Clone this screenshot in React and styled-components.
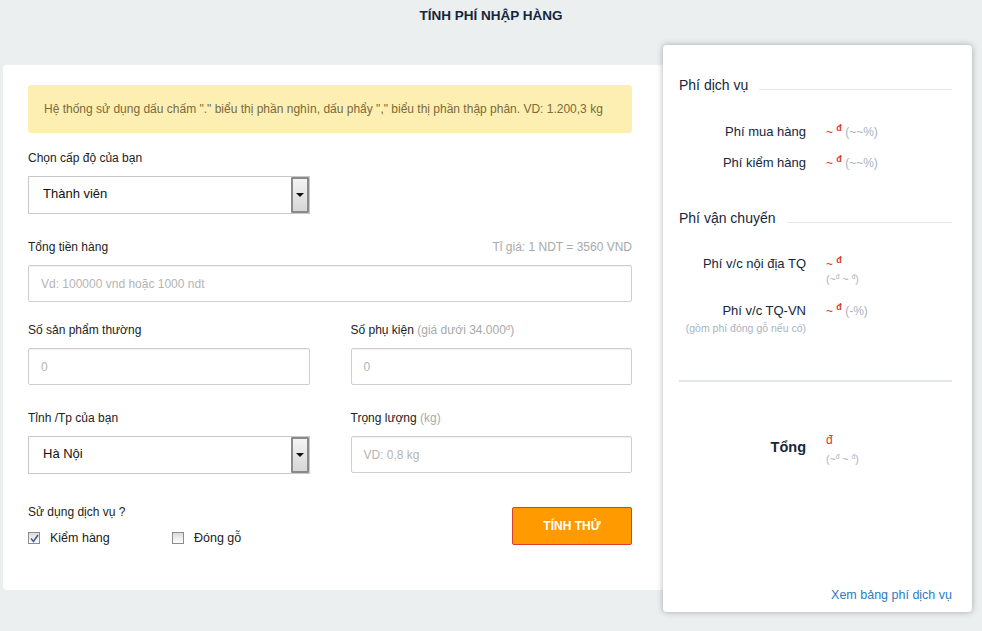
import React from 'react'
import styled, { createGlobalStyle } from 'styled-components'

const GlobalStyle = createGlobalStyle`
  body {
    margin: 0;
    background: #ebeff0;
    font-family: "Liberation Sans", Arial, sans-serif;
  }
`

const Page = styled.div`
  width: 982px;
  height: 631px;
  overflow: hidden;
  background: #ebeff0;
`

const Header = styled.h1`
  margin: 0;
  height: 45px;
  padding-top: 8px;
  box-sizing: border-box;
  text-align: center;
  font-size: 13.5px;
  line-height: 15px;
  font-weight: bold;
  color: #14263a;
`

const Main = styled.div`
  display: flex;
  align-items: flex-start;
  padding: 0 10px 0 3px;
`

const FormCard = styled.div`
  width: 660px;
  height: 525px;
  margin-top: 20px;
  box-sizing: border-box;
  padding: 20px 31px 0 25px;
  background: #fff;
  border-radius: 4px 0 0 4px;
  color: #222;
  font-size: 12px;
`

const Notice = styled.div`
  height: 48px;
  display: flex;
  align-items: center;
  padding: 0 16px;
  box-sizing: border-box;
  background: #fdefb2;
  border-radius: 3px;
  color: #7a6a3c;
  font-size: 12px;
`

const Row = styled.div`
  display: flex;
  gap: 41px;
  margin-top: ${({ top }) => top}px;
`

const Group = styled.div`
  flex: ${({ fixed }) => (fixed ? `0 0 ${fixed}px` : 1)};
  min-width: 0;
`

const LabelLine = styled.div`
  display: flex;
  justify-content: space-between;
  line-height: 16px;
  margin-bottom: 10px;
`

const Muted = styled.span`
  color: #a9a9a9;
`

const Sup = styled.sup`
  font-size: 0.65em;
  vertical-align: 0.55em;
  line-height: 0;
`

const Input = styled.div`
  height: 37px;
  box-sizing: border-box;
  border: 1px solid #cfcfcf;
  border-radius: 2px;
  box-shadow: inset 0 1px 1px rgba(0, 0, 0, 0.06);
  padding-left: 12px;
  display: flex;
  align-items: center;
  color: #b4b4b4;
`

const Select = styled.div`
  height: 38px;
  box-sizing: border-box;
  border: 1px solid #c8c8c8;
  display: flex;
  align-items: stretch;
  color: #111;
  font-size: 13px;
`

const SelectValue = styled.div`
  flex: 1;
  display: flex;
  align-items: center;
  padding: 0 0 3px 14px;
`

const SelectArrow = styled.div`
  width: 18px;
  box-sizing: border-box;
  border: 2px solid #8a8a8a;
  border-radius: 1px;
  background: linear-gradient(#f4f4f4, #d6d6d6);
  display: flex;
  align-items: center;
  justify-content: center;

  &::after {
    content: '';
    border-left: 4px solid transparent;
    border-right: 4px solid transparent;
    border-top: 4px solid #111;
  }
`

const Bottom = styled.div`
  display: flex;
  justify-content: space-between;
  align-items: flex-start;
  margin-top: 30px;
`

const ServiceBlock = styled.div`
  line-height: 16px;
`

const Checks = styled.div`
  display: flex;
  margin-top: 10px;
`

const CheckItem = styled.label`
  width: 144px;
  display: flex;
  align-items: center;
  gap: 10px;
  font-size: 12.5px;
  color: #222;
`

const Box = styled.span`
  width: 12px;
  height: 12px;
  box-sizing: border-box;
  border: 1px solid #8c8c8c;
  background: linear-gradient(#dcdcdc, #fdfdfd);
  display: flex;
  align-items: center;
  justify-content: center;
`

const Button = styled.button`
  width: 120px;
  height: 38px;
  margin-top: 3px;
  background: #ff9a00;
  border: 1px solid #d8402e;
  border-radius: 2px;
  color: #fff;
  font-family: "Liberation Sans", Arial, sans-serif;
  font-weight: bold;
  font-size: 12px;
`

const SideCard = styled.div`
  width: 309px;
  height: 567px;
  box-sizing: border-box;
  padding: 32px 20px 10px 16px;
  background: #fff;
  border-radius: 4px;
  box-shadow: 0 0 6px rgba(0, 0, 0, 0.3);
  display: flex;
  flex-direction: column;
  color: #15273a;
  font-size: 13px;
`

const SectionTitle = styled.div`
  display: flex;
  align-items: center;
  gap: 11px;
  font-size: 14px;
  line-height: 16px;
  margin-top: ${({ top }) => top || 0}px;

  &::after {
    content: '';
    flex: 1;
    height: 1px;
    margin-top: 8px;
    background: #e4e8e9;
  }
`

const FeeRow = styled.div`
  display: flex;
  gap: 20px;
  margin-top: ${({ top }) => top}px;
`

const FeeLabel = styled.div`
  width: 127px;
  text-align: right;
  line-height: 16px;
  font-size: ${({ total }) => (total ? '14.5px' : '13px')};
  font-weight: ${({ total }) => (total ? 'bold' : 'normal')};
  padding-top: ${({ total }) => (total ? 7 : 0)}px;
`

const Note = styled.div`
  font-size: 10.5px;
  color: #a9b3bf;
  line-height: 14px;
  margin-top: 2px;
`

const FeeValue = styled.div`
  font-size: 12px;
  line-height: 16px;
`

const Red = styled.span`
  color: #dd3526;

  sup {
    font-weight: bold;
    font-size: 0.75em;
  }
`

const Grey = styled.span`
  color: #a9b3bf;
`

const SubValue = styled.div`
  font-size: 10.5px;
  line-height: 14px;
  color: #a9b3bf;
`

const Divider = styled.div`
  height: 2px;
  background: #e3e7e8;
  margin-top: 45px;
`

const Link = styled.a`
  margin-top: auto;
  align-self: flex-end;
  color: #2c7cc1;
  font-size: 12.5px;
  text-decoration: none;
`

function Check ({ checked, children }) {
  return (
    <CheckItem>
      <Box>
        {checked && (
          <svg width='9' height='9' viewBox='0 0 9 9'>
            <path d='M1 4.5 L3.5 7.5 L8 1' fill='none' stroke='#4a5b9c' strokeWidth='1.6' />
          </svg>
        )}
      </Box>
      {children}
    </CheckItem>
  )
}

export default function App () {
  return (
    <Page>
      <GlobalStyle />
      <Header>TÍNH PHÍ NHẬP HÀNG</Header>
      <Main>
        <FormCard>
          <Notice>
            Hệ thống sử dụng dấu chấm "." biểu thị phần nghìn, dấu phẩy "," biểu thị phần thập phân. VD: 1.200,3 kg
          </Notice>

          <Row top={17}>
            <Group fixed={282}>
              <LabelLine>Chọn cấp độ của bạn</LabelLine>
              <Select>
                <SelectValue>Thành viên</SelectValue>
                <SelectArrow />
              </Select>
            </Group>
          </Row>

          <Row top={25}>
            <Group>
              <LabelLine>
                <span>Tổng tiền hàng</span>
                <Muted>Tỉ giá: 1 NDT = 3560 VND</Muted>
              </LabelLine>
              <Input>Vd: 100000 vnd hoặc 1000 ndt</Input>
            </Group>
          </Row>

          <Row top={20}>
            <Group>
              <LabelLine>Số sản phẩm thường</LabelLine>
              <Input>0</Input>
            </Group>
            <Group>
              <LabelLine>
                <span>Số phụ kiện <Muted>(giá dưới 34.000<Sup>đ</Sup>)</Muted></span>
              </LabelLine>
              <Input>0</Input>
            </Group>
          </Row>

          <Row top={25}>
            <Group>
              <LabelLine>Tỉnh /Tp của bạn</LabelLine>
              <Select>
                <SelectValue>Hà Nội</SelectValue>
                <SelectArrow />
              </Select>
            </Group>
            <Group>
              <LabelLine>
                <span>Trọng lượng <Muted>(kg)</Muted></span>
              </LabelLine>
              <Input>VD: 0,8 kg</Input>
            </Group>
          </Row>

          <Bottom>
            <ServiceBlock>
              Sử dụng dịch vụ ?
              <Checks>
                <Check checked>Kiểm hàng</Check>
                <Check>Đóng gỗ</Check>
              </Checks>
            </ServiceBlock>
            <Button>TÍNH THỬ</Button>
          </Bottom>
        </FormCard>

        <SideCard>
          <SectionTitle>Phí dịch vụ</SectionTitle>
          <FeeRow top={31}>
            <FeeLabel>Phí mua hàng</FeeLabel>
            <FeeValue><Red>~ <Sup>đ</Sup></Red> <Grey>(~~%)</Grey></FeeValue>
          </FeeRow>
          <FeeRow top={15}>
            <FeeLabel>Phí kiểm hàng</FeeLabel>
            <FeeValue><Red>~ <Sup>đ</Sup></Red> <Grey>(~~%)</Grey></FeeValue>
          </FeeRow>

          <SectionTitle top={39}>Phí vận chuyển</SectionTitle>
          <FeeRow top={30}>
            <FeeLabel>Phí v/c nội địa TQ</FeeLabel>
            <FeeValue>
              <Red>~ <Sup>đ</Sup></Red>
              <SubValue>(~<Sup>đ</Sup> ~ <Sup>đ</Sup>)</SubValue>
            </FeeValue>
          </FeeRow>
          <FeeRow top={17}>
            <FeeLabel>
              Phí v/c TQ-VN
              <Note>(gồm phí đóng gỗ nếu có)</Note>
            </FeeLabel>
            <FeeValue><Red>~ <Sup>đ</Sup></Red> <Grey>(-%)</Grey></FeeValue>
          </FeeRow>

          <Divider />

          <FeeRow top={50}>
            <FeeLabel total>Tổng</FeeLabel>
            <FeeValue>
              <Red>đ</Red>
              <SubValue style={{ marginTop: 4 }}>(~<Sup>đ</Sup> ~ <Sup>đ</Sup>)</SubValue>
            </FeeValue>
          </FeeRow>

          <Link href='#'>Xem bảng phí dịch vụ</Link>
        </SideCard>
      </Main>
    </Page>
  )
}
